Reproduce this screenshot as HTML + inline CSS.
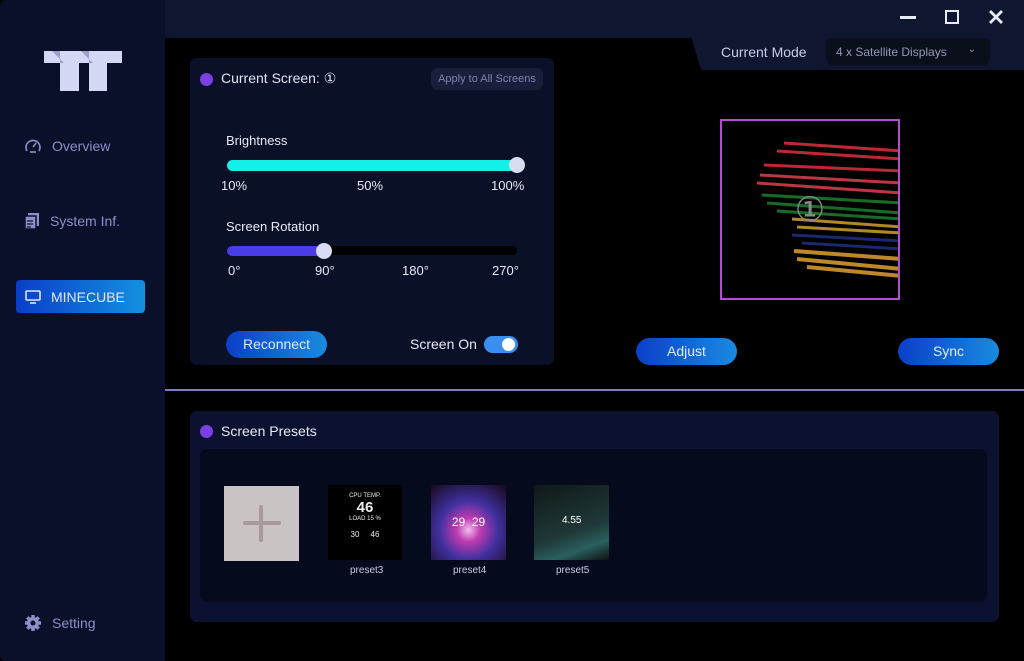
<!DOCTYPE html>
<html><head><style>
*{margin:0;padding:0;box-sizing:border-box}
body{width:1024px;height:661px;background:#000;font-family:"Liberation Sans",sans-serif;position:relative;overflow:hidden;color:#e8eaf6}
.abs{position:absolute}
.side{left:0;top:0;width:165px;height:661px;background:#0a1029;border-radius:6px 0 0 6px}
.nav{left:24px;font-size:14px;color:#8a90c8;display:flex;align-items:center;gap:10px}
.btn{border-radius:14px;background:linear-gradient(90deg,#0a3fc8,#1a8ae0);color:#e0ecff;font-size:14px;text-align:center}
</style></head><body>
<div class="abs" style="left:165px;top:0;width:859px;height:38px;background:#0e1630"></div>
<div class="abs side"></div>
<!-- logo -->
<svg class="abs" style="left:44px;top:51px" width="78" height="40" viewBox="0 0 78 40">
<path d="M0 0H78V12H63V40H45V12H35V40H16V12H0Z" fill="#d4d8f4"/>
<path d="M8 0L20 12H16V0Z" fill="#9aa0c8"/>
<path d="M37 0L49 12H45V0Z" fill="#9aa0c8"/>
</svg>
<div class="abs nav" style="top:137px"><svg width="18" height="18" viewBox="0 0 18 18" fill="none" stroke="#8a90c8" stroke-width="1.6"><path d="M3 14A7 7 0 1 1 15 14"/><path d="M9 10L12 6"/><path d="M6 15H12"/></svg>Overview</div>
<div class="abs nav" style="top:212px"><svg width="16" height="18" viewBox="0 0 16 18"><rect x="4" y="1" width="11" height="13" fill="#8a90c8"/><rect x="1" y="4" width="11" height="13" fill="#8a90c8" stroke="#0a1029" stroke-width="1.5"/><path d="M3 9H9M3 12H9M3 15H7" stroke="#0a1029" stroke-width="1.3"/></svg>System Inf.</div>
<div class="abs" style="left:16px;top:280px;width:129px;height:33px;border-radius:4px;background:linear-gradient(90deg,#0a3ec8,#1490e0);display:flex;align-items:center;padding-left:9px;gap:10px;font-size:14px;color:#dfe8ff"><svg width="16" height="14" viewBox="0 0 16 14" fill="none" stroke="#dfe8ff" stroke-width="1.6"><rect x="1" y="1" width="14" height="9" rx="1"/><path d="M5 13H11"/></svg>MINECUBE</div>
<div class="abs nav" style="top:614px"><svg width="18" height="18" viewBox="0 0 18 18"><circle cx="9" cy="9" r="6" fill="#8a90c8"/><g stroke="#8a90c8" stroke-width="3.5"><path d="M9 1V17M1 9H17M3.3 3.3L14.7 14.7M14.7 3.3L3.3 14.7"/></g><circle cx="9" cy="9" r="2.5" fill="#0a1029"/></svg>Setting</div>
<!-- window controls -->
<div class="abs" style="left:900px;top:16px;width:16px;height:3px;background:#e8eaf6"></div>
<div class="abs" style="left:945px;top:10px;width:14px;height:14px;border:2.5px solid #e8eaf6"></div>
<svg class="abs" style="left:989px;top:10px" width="14" height="14" viewBox="0 0 14 14"><path d="M1 1L13 13M13 1L1 13" stroke="#e8eaf6" stroke-width="2.8"/></svg>
<!-- current mode -->
<div class="abs" style="left:690px;top:33px;width:334px;height:37px;background:#0e1630;clip-path:polygon(0 0,100% 0,100% 100%,11px 100%)"></div>
<div class="abs" style="left:721px;top:44px;font-size:14px;color:#c8cce8">Current Mode</div>
<div class="abs" style="left:826px;top:38px;width:164px;height:27px;background:#0a0f1c;border-radius:6px;font-size:12px;color:#9098b8;padding:7px 0 0 10px">4 x Satellite Displays<span style="position:absolute;right:14px;top:6px;font-size:10px">&#8964;</span></div>
<!-- current screen panel -->
<div class="abs" style="left:190px;top:58px;width:364px;height:307px;background:#0a1028;border-radius:6px"></div>
<div class="abs" style="left:200px;top:73px;width:13px;height:13px;border-radius:50%;background:#7b3fe4"></div>
<div class="abs" style="left:221px;top:70px;font-size:14px;color:#e0e4f4">Current Screen: ①</div>
<div class="abs" style="left:431px;top:68px;width:112px;height:22px;background:#171f3a;border-radius:7px;font-size:11px;color:#7c84b0;text-align:center;line-height:22px">Apply to All Screens</div>
<div class="abs" style="left:226px;top:133px;font-size:13px">Brightness</div>
<div class="abs" style="left:227px;top:160px;width:290px;height:11px;background:#12f0e8;border-radius:6px"></div>
<div class="abs" style="left:509px;top:157px;width:16px;height:16px;border-radius:50%;background:#d8dcf0"></div>
<div class="abs" style="left:221px;top:178px;font-size:13px">10%</div>
<div class="abs" style="left:357px;top:178px;font-size:13px">50%</div>
<div class="abs" style="left:491px;top:178px;font-size:13px">100%</div>
<div class="abs" style="left:226px;top:219px;font-size:13px">Screen Rotation</div>
<div class="abs" style="left:227px;top:246px;width:290px;height:9px;background:#000;border-radius:5px"></div>
<div class="abs" style="left:227px;top:246px;width:98px;height:10px;background:#4a3de8;border-radius:5px"></div>
<div class="abs" style="left:316px;top:243px;width:16px;height:16px;border-radius:50%;background:#d8dcf0"></div>
<div class="abs" style="left:228px;top:263px;font-size:13px">0°</div>
<div class="abs" style="left:315px;top:263px;font-size:13px">90°</div>
<div class="abs" style="left:402px;top:263px;font-size:13px">180°</div>
<div class="abs" style="left:492px;top:263px;font-size:13px">270°</div>
<div class="abs btn" style="left:226px;top:331px;width:101px;height:27px;line-height:27px">Reconnect</div>
<div class="abs" style="left:410px;top:336px;font-size:14px">Screen On</div>
<div class="abs" style="left:484px;top:336px;width:34px;height:17px;border-radius:9px;background:#3a8ef0"></div>
<div class="abs" style="left:502px;top:338px;width:13px;height:13px;border-radius:50%;background:#fff"></div>
<!-- preview -->
<div class="abs" style="left:720px;top:119px;width:180px;height:181px;border:2px solid #b050d0;overflow:hidden;background:#000">
<svg width="180" height="181" viewBox="0 0 180 181">
<g stroke-width="3" opacity="0.85">
<path d="M62 22L180 30M55 30L180 38M42 44L180 50" stroke="#e03040"/>
<path d="M38 54L180 62M35 62L180 72" stroke="#e04050"/>
<path d="M40 74L180 82M45 82L180 92M55 90L180 98" stroke="#1c8030"/>
<path d="M70 98L180 106M75 106L180 112" stroke="#d0a030"/>
<path d="M70 114L180 120M80 122L180 128" stroke="#203080"/>
<path d="M72 130L180 138M75 138L180 148M85 146L180 155" stroke="#e0a030" stroke-width="4"/>
</g>
<text x="88" y="100" font-size="34" fill="#888" text-anchor="middle" font-family="Liberation Sans,DejaVu Sans">①</text>
</svg></div>
<div class="abs btn" style="left:636px;top:338px;width:101px;height:27px;line-height:27px">Adjust</div>
<div class="abs btn" style="left:898px;top:338px;width:101px;height:27px;line-height:27px">Sync</div>
<div class="abs" style="left:165px;top:389px;width:859px;height:2px;background:#7e7ec0"></div>
<!-- presets -->
<div class="abs" style="left:190px;top:411px;width:809px;height:211px;background:#0a1230;border-radius:7px"></div>
<div class="abs" style="left:200px;top:425px;width:13px;height:13px;border-radius:50%;background:#7b3fe4"></div>
<div class="abs" style="left:221px;top:423px;font-size:14px">Screen Presets</div>
<div class="abs" style="left:200px;top:449px;width:787px;height:153px;background:#050a1c;border-radius:7px"></div>
<div class="abs" style="left:224px;top:486px;width:75px;height:75px;background:#cac3c3"></div>
<div class="abs" style="left:243px;top:521px;width:38px;height:4px;background:#a89a98;border-radius:2px"></div>
<div class="abs" style="left:259px;top:505px;width:4px;height:37px;background:#a89a98;border-radius:2px"></div>
<div class="abs" style="left:328px;top:485px;width:74px;height:75px;background:#000;color:#eee;font-size:6px;text-align:center"><div style="margin-top:8px">CPU TEMP.</div><div style="font-size:15px;font-weight:bold">46</div><div>LOAD 15 %</div><div style="margin-top:8px;font-size:8px">30 &nbsp; &nbsp; 46</div></div>
<div class="abs" style="left:431px;top:485px;width:75px;height:75px;background:radial-gradient(circle at 50% 60%,#f0c0f0 0,#c03cb0 20%,#4030a0 50%,#180818 100%);color:#fff;font-size:12px;padding-top:30px;text-align:center">29 &nbsp;29</div>
<div class="abs" style="left:534px;top:485px;width:75px;height:75px;background:linear-gradient(160deg,#101818,#203838 60%,#2a6060 80%,#101010);color:#fff;font-size:10px;padding:30px 0 0 28px">4.55</div>
<div class="abs" style="left:350px;top:565px;font-size:10px;color:#c8cce8">preset3</div>
<div class="abs" style="left:453px;top:565px;font-size:10px;color:#c8cce8">preset4</div>
<div class="abs" style="left:556px;top:565px;font-size:10px;color:#c8cce8">preset5</div>
</body></html>
